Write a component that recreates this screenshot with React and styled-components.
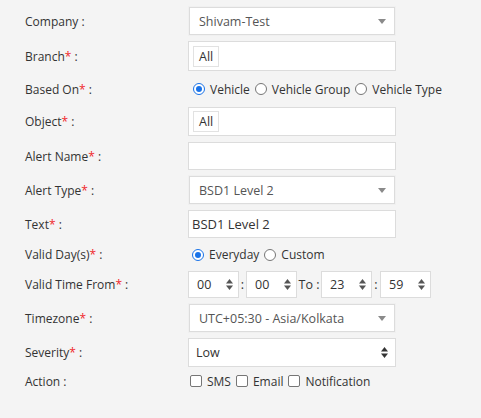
import React from "react";
import styled, { createGlobalStyle } from "styled-components";

const Global = createGlobalStyle`
  html, body { margin: 0; padding: 0; background: #f4f4f4; }
  body { font-family: "Open Sans", "Noto Sans", sans-serif; font-size: 12px; color: #333; }
  * { box-sizing: border-box; }
`;

const Form = styled.div`
  width: 481px;
  height: 418px;
  padding: 7px 0 0 25px;
  background: #f4f4f4;
  display: flex;
  flex-direction: column;
  gap: 6px;
`;

const Row = styled.div`
  display: flex;
  align-items: center;
  height: ${(p) => p.$h}px;
`;

const Label = styled.div`
  width: 163px;
  flex: none;
  color: #333;
  font-size: 12px;
  white-space: nowrap;
`;

const Req = styled.span`
  color: #f0262b;
`;

const Box = styled.div`
  width: 208px;
  height: 100%;
  background: #fff;
  border: 1px solid #dcdcdc;
  display: flex;
  align-items: center;
  padding: 0 ${(p) => p.$pl ?? 9}px;
  color: ${(p) => (p.$muted ? "#555" : "#333")};
  font-size: 12.5px;
  position: relative;
`;

const SelectBox = styled(Box)`
  width: 206px;
  margin-left: 1px;
  justify-content: space-between;
  padding-right: 8px;
  box-shadow: 0 0 0 1px #f0f0f0;
`;

const TextInput = styled.input`
  width: 208px;
  height: 100%;
  border: 1px solid #dcdcdc;
  background: #fff;
  padding: 0 3px;
  font-family: inherit;
  font-size: 13px;
  color: #333;
  outline: none;
`;

const Tag = styled.span`
  display: inline-flex;
  align-items: center;
  height: 21px;
  padding: 0 5px;
  border: 1px solid #e2e2e2;
  background: #fff;
  color: #333;
  font-size: 12.5px;
`;

const Options = styled.div`
  display: flex;
  align-items: center;
  gap: 5px;
  padding-left: ${(p) => p.$pl ?? 0}px;
  color: #333;
  font-size: 12px;
`;

const Choice = styled.label`
  display: inline-flex;
  align-items: center;
  gap: 5px;
`;

const Radio = styled.span`
  width: 12px;
  height: 12px;
  border-radius: 50%;
  border: 1px solid ${(p) => (p.$on ? "#1a73e8" : "#767676")};
  background: #fff;
  display: inline-flex;
  align-items: center;
  justify-content: center;
  &::after {
    content: "";
    width: 6px;
    height: 6px;
    border-radius: 50%;
    background: ${(p) => (p.$on ? "#1a73e8" : "transparent")};
  }
`;

const Check = styled.span`
  width: 12px;
  height: 12px;
  border-radius: 2px;
  border: 1px solid #767676;
  background: #fff;
`;

const TimeRow = styled.div`
  display: flex;
  align-items: center;
  height: 100%;
  font-size: 12.5px;
`;

const TimeBox = styled.div`
  width: 51px;
  height: 100%;
  background: #fff;
  border: 1px solid #dcdcdc;
  display: flex;
  align-items: center;
  justify-content: space-between;
  padding: 0 5px 0 8px;
  color: #333;
`;

const Sep = styled.span`
  width: ${(p) => p.$w}px;
  text-align: center;
  color: #333;
`;

const Caret = () => (
  <svg width="8" height="5" viewBox="0 0 8 5">
    <path d="M0 0 H8 L4 5 Z" fill="#8a8a8a" />
  </svg>
);

const Spin = ({ color = "#555" }) => (
  <svg width="7" height="11" viewBox="0 0 7 11">
    <path d="M0 4.5 L3.5 0 L7 4.5 Z" fill={color} />
    <path d="M0 6.5 L3.5 11 L7 6.5 Z" fill={color} />
  </svg>
);

const Time = ({ v }) => (
  <TimeBox>
    <span>{v}</span>
    <Spin />
  </TimeBox>
);

export default function App() {
  return (
    <>
      <Global />
      <Form>
        <Row $h={28}>
          <Label>Company :</Label>
          <SelectBox $muted>
            <span>Shivam-Test</span>
            <Caret />
          </SelectBox>
        </Row>
        <Row $h={30}>
          <Label>Branch<Req>*</Req> :</Label>
          <Box $pl={4}>
            <Tag>All</Tag>
          </Box>
        </Row>
        <Row $h={24}>
          <Label>Based On<Req>*</Req> :</Label>
          <Options $pl={5}>
            <Choice><Radio $on />Vehicle</Choice>
            <Choice><Radio />Vehicle Group</Choice>
            <Choice><Radio />Vehicle Type</Choice>
          </Options>
        </Row>
        <Row $h={29}>
          <Label>Object<Req>*</Req> :</Label>
          <Box $pl={4}>
            <Tag>All</Tag>
          </Box>
        </Row>
        <Row $h={28}>
          <Label>Alert Name<Req>*</Req> :</Label>
          <TextInput readOnly value="" />
        </Row>
        <Row $h={28}>
          <Label>Alert Type<Req>*</Req> :</Label>
          <SelectBox $muted>
            <span>BSD1 Level 2</span>
            <Caret />
          </SelectBox>
        </Row>
        <Row $h={28}>
          <Label>Text<Req>*</Req> :</Label>
          <TextInput readOnly value="BSD1 Level 2" />
        </Row>
        <Row $h={21}>
          <Label>Valid Day(s)<Req>*</Req> :</Label>
          <Options $pl={4}>
            <Choice><Radio $on />Everyday</Choice>
            <Choice><Radio />Custom</Choice>
          </Options>
        </Row>
        <Row $h={27}>
          <Label>Valid Time From<Req>*</Req> :</Label>
          <TimeRow>
            <Time v="00" />
            <Sep $w={7}>:</Sep>
            <Time v="00" />
            <Sep $w={24}>To :</Sep>
            <Time v="23" />
            <Sep $w={8}>:</Sep>
            <Time v="59" />
          </TimeRow>
        </Row>
        <Row $h={28}>
          <Label>Timezone<Req>*</Req> :</Label>
          <SelectBox $muted>
            <span>UTC+05:30 - Asia/Kolkata</span>
            <Caret />
          </SelectBox>
        </Row>
        <Row $h={29}>
          <Label>Severity<Req>*</Req> :</Label>
          <Box $pl={7}>
            <span style={{ flex: 1 }}>Low</span>
            <Spin color="#333" />
          </Box>
        </Row>
        <Row $h={16}>
          <Label>Action :</Label>
          <Options $pl={2}>
            <Choice><Check />SMS</Choice>
            <Choice><Check />Email</Choice>
            <Choice><Check />Notification</Choice>
          </Options>
        </Row>
      </Form>
    </>
  );
}
